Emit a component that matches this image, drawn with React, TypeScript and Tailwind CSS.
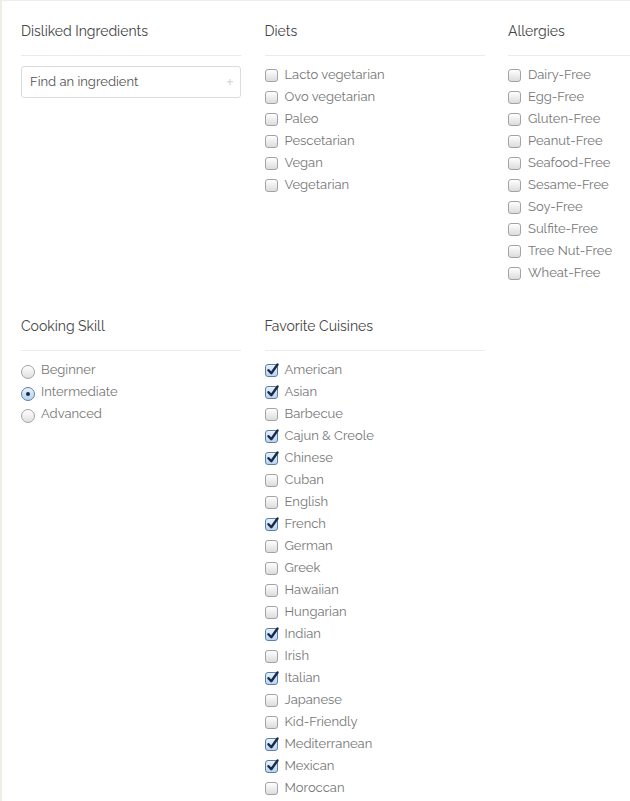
import React from 'react';

const diets = ['Lacto vegetarian', 'Ovo vegetarian', 'Paleo', 'Pescetarian', 'Vegan', 'Vegetarian'];

const allergies = [
  'Dairy-Free',
  'Egg-Free',
  'Gluten-Free',
  'Peanut-Free',
  'Seafood-Free',
  'Sesame-Free',
  'Soy-Free',
  'Sulfite-Free',
  'Tree Nut-Free',
  'Wheat-Free',
];

const skills = ['Beginner', 'Intermediate', 'Advanced'];

const cuisines: [string, boolean][] = [
  ['American', true],
  ['Asian', true],
  ['Barbecue', false],
  ['Cajun & Creole', true],
  ['Chinese', true],
  ['Cuban', false],
  ['English', false],
  ['French', true],
  ['German', false],
  ['Greek', false],
  ['Hawaiian', false],
  ['Hungarian', false],
  ['Indian', true],
  ['Irish', false],
  ['Italian', true],
  ['Japanese', false],
  ['Kid-Friendly', false],
  ['Mediterranean', true],
  ['Mexican', true],
  ['Moroccan', false],
];

function Box({ checked }: { checked?: boolean }) {
  if (checked) {
    return (
      <span className="relative w-[13px] h-[13px] shrink-0 rounded-[3px] border border-[#5a7fa8] bg-gradient-to-b from-[#e6f1fb] to-[#b9d4ee]">
        <svg viewBox="0 0 13 13" className="absolute left-[0px] top-[-2px] w-[13px] h-[13px]">
          <path d="M2.5 7.2 L5.3 10.2 L11.5 1.5" fill="none" stroke="#1b2a4a" strokeWidth="2.4" strokeLinecap="round" strokeLinejoin="round" />
        </svg>
      </span>
    );
  }
  return (
    <span className="w-[13px] h-[13px] shrink-0 rounded-[3px] border border-[#a3a3a3] bg-gradient-to-b from-[#ffffff] to-[#dcdcdc]" />
  );
}

function Radio({ checked }: { checked?: boolean }) {
  return (
    <span
      className={`flex items-center justify-center w-[14px] h-[14px] mt-[3px] shrink-0 rounded-full border ${
        checked
          ? 'border-[#5a7fa8] bg-gradient-to-b from-[#e6f1fb] to-[#b9d4ee]'
          : 'border-[#a3a3a3] bg-gradient-to-b from-[#ffffff] to-[#e0e0e0]'
      }`}
    >
      {checked && <span className="w-[4px] h-[4px] rounded-full bg-[#1b2a4a]" />}
    </span>
  );
}

function Section({ title, children }: { title: string; children: React.ReactNode }) {
  return (
    <div className="w-[220px] shrink-0">
      <h3 className="text-[14px] leading-[20px] text-[#444]">{title}</h3>
      <hr className="mt-[14px] mb-[8px] border-t border-[#ebebeb]" />
      {children}
    </div>
  );
}

function CheckList({ items }: { items: [string, boolean][] }) {
  return (
    <ul>
      {items.map(([label, checked]) => (
        <li key={label} className="flex items-center gap-[7px] h-[22px] text-[13px] text-[#777]">
          <Box checked={checked} />
          <span>{label}</span>
        </li>
      ))}
    </ul>
  );
}

export default function App() {
  return (
    <div
      className="w-[630px] h-[801px] overflow-hidden bg-white border-t border-l-2 border-[#efeee6]"
      style={{ fontFamily: 'Raleway, Lato, "Open Sans", sans-serif' }}
    >
      <div className="pl-[19px] pt-[20px] flex flex-col gap-[32px]">
        <div className="flex gap-x-[23.5px] items-start">
          <Section title="Disliked Ingredients">
            <div className="mt-[10px] flex items-center justify-between h-[32px] pl-[8px] pr-[6px] border border-[#dcdcdc] rounded-[3px]">
              <span className="text-[13px] text-[#555]">Find an ingredient</span>
              <span className="text-[19px] leading-none text-[#dadada]">+</span>
            </div>
          </Section>
          <Section title="Diets">
            <CheckList items={diets.map((d) => [d, false])} />
          </Section>
          <Section title="Allergies">
            <CheckList items={allergies.map((a) => [a, false])} />
          </Section>
        </div>
        <div className="flex gap-x-[23.5px] items-start">
          <Section title="Cooking Skill">
            <ul>
              {skills.map((s) => (
                <li key={s} className="flex items-center gap-[6px] h-[22px] text-[13px] text-[#777]">
                  <Radio checked={s === 'Intermediate'} />
                  <span>{s}</span>
                </li>
              ))}
            </ul>
          </Section>
          <Section title="Favorite Cuisines">
            <CheckList items={cuisines} />
          </Section>
        </div>
      </div>
    </div>
  );
}
